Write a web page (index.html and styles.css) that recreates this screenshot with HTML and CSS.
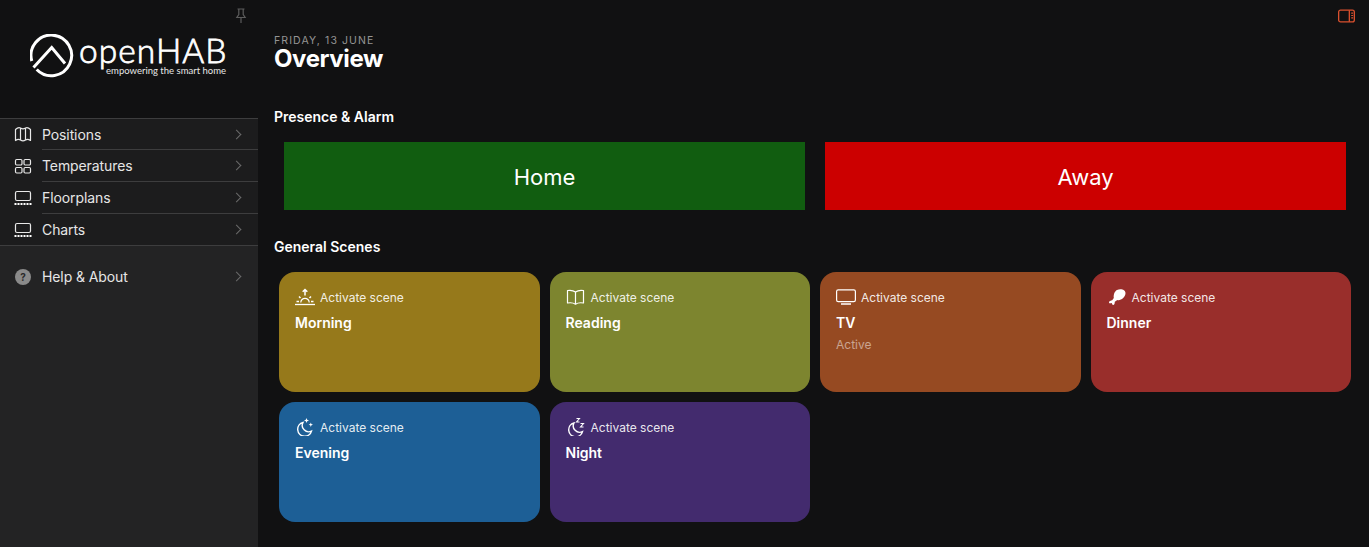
FILE: index.html
```html
<!DOCTYPE html>
<html lang="en">
<head>
<meta charset="utf-8">
<title>openHAB Overview</title>
<link rel="stylesheet" href="styles.css">
</head>
<body>
<div class="app">
  <aside class="sidebar">
    <div class="brand">
      <svg class="pin" viewBox="0 0 12 16" width="12" height="16" fill="none" stroke="#5c5c5c" stroke-width="1.2"><path d="M2.500 1h7M3.800 1v5.500L1.800 9.500h8.400L8.200 6.500V1M6 9.500V15"/></svg>
      <div class="logo">
        <svg class="logo-mark" viewBox="0 0 44 44" width="44" height="44" fill="none" stroke="#fff" stroke-width="3"><path d="M1.800 27A20.300 20.300 0 1 1 6.700 35.500"/><path d="M3.500 33.500L21.700 13.500L35 29.500"/></svg>
        <div class="logo-text">
          <span class="logo-name">openHAB</span>
          <span class="logo-tag">empowering the smart home</span>
        </div>
      </div>
    </div>
    <ul class="menu">
      <li class="menu-item">
        <svg class="ico" viewBox="0 0 18 16" width="18" height="16" fill="none" stroke="#e8e8e8" stroke-width="1.200" stroke-linejoin="round"><path d="M1.500 3.500C3.500 1.500 5 1 6.500 2C8.500 3.300 9.500 3.300 11.500 2C13 1 14.500 1.500 16.500 3.500V14.500C14.500 13 13 13 11.500 14C9.500 15.300 8.500 15.300 6.500 14C5 13 3.500 13 1.500 14.500Z"/><path d="M6.500 2V14M11.500 2V14"/></svg>
        <span class="menu-label">Positions</span><span class="chev"></span>
      </li>
      <li class="menu-item">
        <svg class="ico" viewBox="0 0 18 16" width="18" height="16" fill="none" stroke="#e8e8e8" stroke-width="1.200"><rect x="1.500" y="1.500" width="6.500" height="5.500" rx="1.200"/><rect x="10" y="1.500" width="6.500" height="5.500" rx="1.200"/><rect x="1.500" y="9.500" width="6.500" height="5.500" rx="1.200"/><rect x="10" y="9.500" width="6.500" height="5.500" rx="1.200"/></svg>
        <span class="menu-label">Temperatures</span><span class="chev"></span>
      </li>
      <li class="menu-item">
        <svg class="ico" viewBox="0 0 18 16" width="18" height="16" fill="none" stroke="#e8e8e8" stroke-width="1.200"><rect x="1.500" y="1.500" width="15" height="9" rx="1.500"/><path d="M.5 14h17" stroke="#fff" stroke-width="2" stroke-dasharray="2 1"/></svg>
        <span class="menu-label">Floorplans</span><span class="chev"></span>
      </li>
      <li class="menu-item">
        <svg class="ico" viewBox="0 0 18 16" width="18" height="16" fill="none" stroke="#e8e8e8" stroke-width="1.200"><rect x="1.500" y="1.500" width="15" height="9" rx="1.500"/><path d="M.5 14h17" stroke="#fff" stroke-width="2" stroke-dasharray="2 1"/></svg>
        <span class="menu-label">Charts</span><span class="chev"></span>
      </li>
    </ul>
    <div class="help">
      <div class="menu-item">
        <span class="help-ico">?</span>
        <span class="menu-label">Help &amp; About</span><span class="chev"></span>
      </div>
    </div>
  </aside>
  <main class="main">
    <div class="topbar">
      <svg viewBox="0 0 18 14" width="17" height="14" fill="none" stroke="#d9502e" stroke-width="1.400"><rect x=".7" y=".7" width="16.600" height="12.600" rx="2"/><path d="M12 1v12"/><path d="M14 4h2M14 6.500h2M14 9h2" stroke-width="1.200"/></svg>
    </div>
    <header class="page-head">
      <div class="date">Friday, 13 June</div>
      <h1 class="title">Overview</h1>
    </header>
    <h2 class="section first">Presence &amp; Alarm</h2>
    <div class="presence">
      <div class="pbtn home">Home</div>
      <div class="pbtn away">Away</div>
    </div>
    <h2 class="section">General Scenes</h2>
    <div class="cards">
      <div class="card morning">
        <div class="card-top">
          <svg class="cico" viewBox="0 0 20 18" width="20" height="18" fill="none" stroke="#fff" stroke-width="1.200"><path d="M0 16.500h20" stroke-width="1.300"/><path d="M5.800 14.500a4.200 4.200 0 0 1 8.400 0"/><path d="M10 7.500V1.500M7.700 3.800L10 1.500L12.300 3.800M1.500 13.500h2.500M16 13.500h2.500M4 8.500L5.500 10M16 8.500L14.500 10" stroke-width="1.500"/></svg>
          <span>Activate scene</span>
        </div>
        <div class="card-title">Morning</div>
      </div>
      <div class="card reading">
        <div class="card-top">
          <svg class="cico" viewBox="0 0 20 16" width="20" height="16" fill="none" stroke="#fff" stroke-width="1.200" stroke-linejoin="round"><path d="M9.500 3C7.500 1.500 4.500 1 1.500 1.500V14c3-.5 6-.2 8 1.200c2-1.400 5-1.700 8-1.200V1.500C14.500 1 11.500 1.500 9.500 3ZM9.500 3v12"/></svg>
          <span>Activate scene</span>
        </div>
        <div class="card-title">Reading</div>
      </div>
      <div class="card tv">
        <div class="card-top">
          <svg class="cico" viewBox="0 0 20 16" width="20" height="16" fill="none" stroke="#fff" stroke-width="1.200"><rect x=".6" y=".8" width="18.800" height="11.800" rx="1.600"/><path d="M5 15h10" stroke-width="1.500"/></svg>
          <span>Activate scene</span>
        </div>
        <div class="card-title">TV</div>
        <div class="card-sub">Active</div>
      </div>
      <div class="card dinner">
        <div class="card-top">
          <svg class="cico" viewBox="0 0 20 18" width="20" height="18" fill="#fff"><path d="M10 2C13.500 .2 18.500 1.500 18.500 5C18.500 9.500 13.500 13 10.300 12L7.800 13.800C7.600 15 7.800 17 6.300 17C5 17 5.200 15.500 4.700 15C4 15.200 2.300 15.800 2 14.500C1.800 13 4 12.700 5.200 12.300L6.800 10C6.300 7 7.500 3.300 10 2Z"/></svg>
          <span>Activate scene</span>
        </div>
        <div class="card-title">Dinner</div>
      </div>
      <div class="card evening">
        <div class="card-top">
          <svg class="cico" viewBox="0 0 20 18" width="20" height="18" fill="none" stroke="#fff" stroke-width="1.400"><path d="M8 4.500A7 7 0 1 0 16.500 13A6.300 6.300 0 0 1 8 4.500Z"/><path d="M11.500 0l.7 1.800L14 2.500l-1.800.7L11.500 5l-.7-1.800L9 2.500l1.800-.7ZM15.800 4.500l.6 1.600L18 6.700l-1.600.6L15.800 9l-.6-1.700L13.600 6.700l1.600-.6Z" fill="#fff" stroke="none"/></svg>
          <span>Activate scene</span>
        </div>
        <div class="card-title">Evening</div>
      </div>
      <div class="card night">
        <div class="card-top">
          <svg class="cico" viewBox="0 0 20 18" width="20" height="18" fill="none" stroke="#fff" stroke-width="1.400"><path d="M8 5A7 7 0 1 0 16.500 13.500A6.300 6.300 0 0 1 8 5Z"/><path d="M10.500 .5h3L10.500 4h3M14.500 5.500h3L14.500 9h3" stroke-width="1.100"/></svg>
          <span>Activate scene</span>
        </div>
        <div class="card-title">Night</div>
      </div>
    </div>
  </main>
</div>
</body>
</html>
```

FILE: styles.css
```css
* { box-sizing: border-box; }
html, body { margin: 0; height: 100%; }
body {
  background: #111112;
  color: #fff;
  font-family: Inter, "Liberation Sans", sans-serif;
  overflow: hidden;
}
.app { display: flex; height: 547px; }

/* Sidebar */
.sidebar { width: 258px; flex: none; display: flex; flex-direction: column; background: #232324; }
.brand { height: 118px; background: #111112; position: relative; padding: 34px 0 0 30px; }
.pin { position: absolute; left: 235px; top: 8px; }
.logo { display: flex; gap: 5px; align-items: flex-start; }
.logo-mark { flex: none; }
.logo-text { display: flex; flex-direction: column; align-items: flex-end; width: 147px; }
.logo-name { align-self: flex-start; font-family: Lato, sans-serif; font-weight: 300; font-size: 33.500px; line-height: 32px; letter-spacing: 1.050px; white-space: nowrap; -webkit-text-stroke: .8px #fff; }
.logo-tag { font-family: Lato, sans-serif; font-size: 9.500px; line-height: 9px; color: #e6e6e6; white-space: nowrap; }
.menu { list-style: none; margin: 0; padding: 0; background: #1c1c1d; border-top: 1px solid #3d3d3e; border-bottom: 1px solid #3d3d3e; }
.menu-item { display: flex; align-items: center; height: 32px; position: relative; padding: 0 16px 1px 14px; font-size: 14px; letter-spacing: -.1px; color: #e6e6e6; }
.menu .menu-item:first-child, .menu .menu-item:last-child { height: 31px; }
.menu .menu-item:last-child { padding-bottom: 0; }
.menu-item .ico { flex: none; margin-right: 10px; }
.menu .menu-item:not(:last-child)::after { content: ""; position: absolute; left: 42px; right: 0; bottom: 0; height: 1px; background: #3d3d3e; }
.menu-label { flex: 1; }
.chev { width: 7px; height: 7px; flex: none; border-top: 1.800px solid #6a6a6a; border-right: 1.800px solid #6a6a6a; transform: rotate(45deg); margin-right: 2px; }
.help { padding-top: 15px; }
.help-ico { width: 16px; height: 16px; margin: 0 11px 0 1px; flex: none; border-radius: 50%; background: #8a8a8a; color: #2a2a2a; font-size: 10px; font-weight: 700; display: flex; align-items: center; justify-content: center; }

/* Main */
.main { flex: 1; min-width: 0; padding: 0 0 0 16px; display: flex; flex-direction: column; }
.topbar { height: 0; display: flex; justify-content: flex-end; padding: 9px 14px 0 0; box-sizing: content-box; }
.page-head { padding-top: 26px; }
.date { font-size: 10.500px; line-height: 11px; letter-spacing: 1.100px; text-transform: uppercase; color: #949494; }
.title { margin: 0; font-size: 24px; line-height: 26px; font-weight: 700; letter-spacing: -.4px; }
.section { margin: 0; font-size: 14px; line-height: 17px; font-weight: 600; }
.section.first { margin-top: 36px; }
.presence { display: flex; gap: 20px; margin: 17px 23px 0 10px; }
.pbtn { flex: 1; height: 68px; padding-top: 1px; display: flex; align-items: center; justify-content: center; font-size: 22px; font-weight: 400; }
.home { background: #115d10; }
.away { background: #cc0000; }
.section:not(.first) { margin-top: 28px; }
.cards { display: grid; grid-template-columns: repeat(4, 1fr); grid-auto-rows: 120px; gap: 10px; margin: 17px 18px 0 5px; }
.card { border-radius: 16px; padding: 16px; }
.card-top { display: flex; align-items: center; height: 18px; font-size: 12px; color: rgba(255,255,255,.9); }
.cico { flex: none; margin-right: 5px; }
.card-title { font-size: 14px; font-weight: 600; line-height: 17px; margin-top: 8px; }
.card-sub { font-size: 12px; line-height: 15px; margin-top: 6px; color: rgba(255,255,255,.5); }
.morning { background: #96791b; }
.reading { background: #7d852f; }
.tv { background: #964a22; }
.dinner { background: #992e2b; }
.evening { background: #1d5f96; }
.night { background: #432b6e; }
```
